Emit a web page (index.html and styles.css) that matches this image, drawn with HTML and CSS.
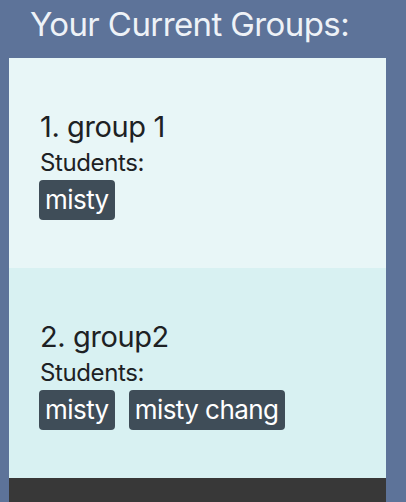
FILE: index.html
```html
<!DOCTYPE html>
<html>
<head>
<meta charset="utf-8">
<link rel="stylesheet" href="styles.css">
</head>
<body>
<div class="page">
  <h1 class="title">Your Current Groups:</h1>
  <div class="groups">
    <div class="group group-a">
      <h2 class="group-name">1. group 1</h2>
      <div class="label">Students:</div>
      <div class="badges">
        <span class="badge">misty</span>
      </div>
    </div>
    <div class="group group-b">
      <h2 class="group-name">2. group2</h2>
      <div class="label">Students:</div>
      <div class="badges">
        <span class="badge">misty</span>
        <span class="badge">misty chang</span>
      </div>
    </div>
    <div class="footer-bar"></div>
  </div>
</div>
</body>
</html>
```

FILE: styles.css
```css
html, body {
  margin: 0;
  padding: 0;
  background: #5d7399;
  font-family: Inter, "Noto Sans", sans-serif;
}
.page {
  padding: 0 20px 0 9px;
}
.title {
  margin: 0;
  padding: 4px 0 0 21px;
  height: 58px;
  box-sizing: border-box;
  font-size: 33px;
  font-weight: 400;
  letter-spacing: -0.6px;
  line-height: 40px;
  color: #eef2f7;
}
.groups {
  display: flex;
  flex-direction: column;
}
.group {
  height: 210px;
  box-sizing: border-box;
  padding: 51px 31px 0 31px;
  color: #1d2124;
}
.group-a { background: #e8f6f7; }
.group-b { background: #d8f1f2; }
.group-name {
  margin: 0;
  font-size: 29px;
  font-weight: 400;
  letter-spacing: -0.4px;
  line-height: 36px;
}
.label {
  margin-top: 3px;
  font-size: 24px;
  letter-spacing: -0.4px;
  line-height: 30px;
}
.badges {
  display: flex;
  gap: 14px;
  margin-top: 2px;
  margin-left: -1px;
}
.badge {
  display: inline-block;
  background: #3f4d58;
  color: #fff;
  font-size: 26px;
  letter-spacing: -0.55px;
  line-height: 40px;
  height: 40px;
  padding: 0 6px;
  border-radius: 4px;
}
.footer-bar {
  height: 30px;
  background: #383838;
}
```
